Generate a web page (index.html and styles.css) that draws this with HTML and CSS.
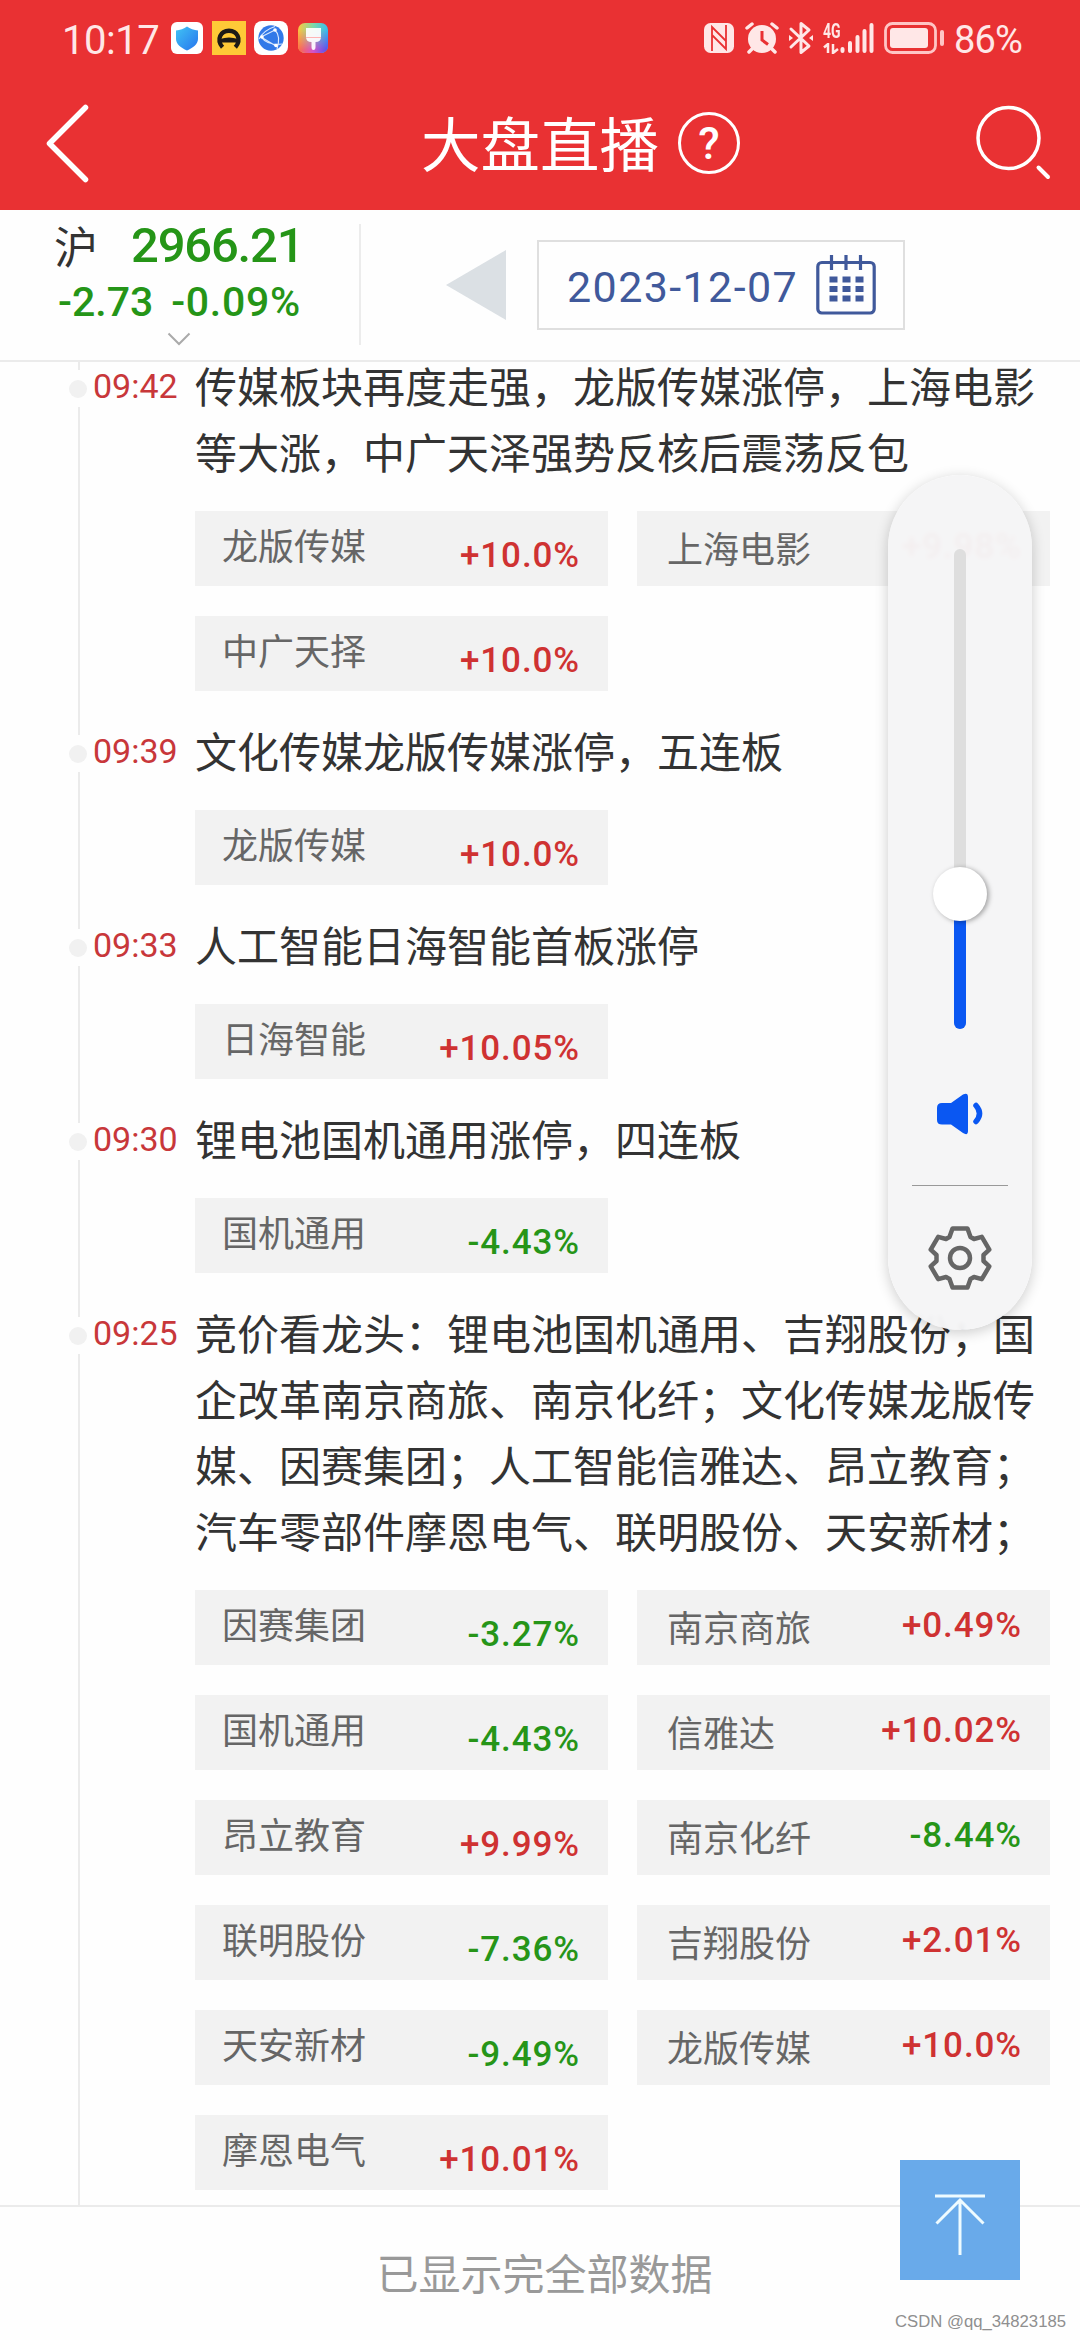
FILE: index.html
```html
<!DOCTYPE html>
<html lang="zh-CN">
<head>
    <meta charset="UTF-8">
    <meta name="viewport" content="width=device-width, initial-scale=1.0">
    <title>大盘直播</title>
    <link rel="stylesheet" href="styles.css">
</head>
<body>
    <header class="header">
        <div class="status-bar">
            <span class="clock">10:17</span>
            <svg class="app-icon shield" width="32" height="32" viewBox="0 0 32 32">
                <defs><linearGradient id="blue" x1="0" y1="0" x2="1" y2="1"><stop offset="0" stop-color="#41c4f4"/><stop offset="1" stop-color="#2674ee"/></linearGradient></defs>
                <rect width="32" height="32" rx="6" fill="#fff"/>
                <path d="M16 4.5C19 7 23 8 27 8.500V17C27 22 22 26 16 28.500C10 26 5 22 5 17V8.500C9 8 13 7 16 4.500Z" fill="url(#blue)"/>
            </svg>
            <svg class="app-icon helmet" width="34" height="34" viewBox="0 0 34 34">
                <rect width="34" height="34" fill="#fec937"/>
                <path d="M9.500 27C1.500 18 7.500 8.500 17 8.500S32.500 18 24.500 27" transform="translate(2.500 2) scale(.85 .9)" fill="none" stroke="#1c1a17" stroke-width="5"/>
                <path d="M8 18Q17 15 26 18V21.500H8Z" fill="#1c1a17"/>
            </svg>
            <svg class="app-icon globe" width="34" height="34" viewBox="0 0 34 34">
                <rect width="34" height="34" rx="8" fill="#fff"/>
                <circle cx="17" cy="17" r="12.700" fill="#3279e8"/>
                <path d="M21 5.500Q10 9 5 18M21 9Q27 15 23 28M7 16Q14 25 28 23M21 9L7 16L22 25" fill="none" stroke="#d9e9ff" stroke-width="1.100"/>
                <circle cx="21" cy="9" r="1.800" fill="#fff"/><circle cx="8" cy="16" r="1.800" fill="#fff"/><circle cx="22" cy="24.500" r="1.800" fill="#fff"/>
            </svg>
            <svg class="app-icon paint" width="30" height="30" viewBox="0 0 30 30">
                <defs>
                    <linearGradient id="top" x1="0" x2="1"><stop offset="0" stop-color="#ffc83d"/><stop offset=".5" stop-color="#7fd8a8"/><stop offset="1" stop-color="#35bdf0"/></linearGradient>
                    <linearGradient id="low" x1="0" x2="1"><stop offset="0" stop-color="#ff6b45"/><stop offset=".5" stop-color="#d553c8"/><stop offset="1" stop-color="#5050f0"/></linearGradient>
                    <linearGradient id="fade" x2="0" y2="1"><stop offset=".2" stop-color="#fff" stop-opacity="0"/><stop offset=".9" stop-color="#fff"/></linearGradient>
                    <mask id="half"><rect width="30" height="30" fill="url(#fade)"/></mask>
                </defs>
                <rect width="30" height="30" rx="7" fill="url(#top)"/>
                <rect width="30" height="30" rx="7" fill="url(#low)" mask="url(#half)"/>
                <path d="M8 5H23V14Q23 19 17.500 19V24Q17.500 27 15.500 27T13.500 24V19Q8 19 8 14Z" fill="#fff" opacity=".92"/>
                <path d="M8 14.500H23" stroke="#ffb4b4" stroke-width="1"/>
            </svg>

            <div class="status-right">
                <svg class="nfc" width="30" height="30" viewBox="0 0 30 30">
                    <rect width="30" height="30" rx="6.500" fill="#ffe7e7"/>
                    <path d="M8 28V4L22 18V6M22 2V26L8 12V24" fill="none" stroke="#e93133" stroke-width="1.800"/>
                </svg>
                <svg class="alarm" width="34" height="32" viewBox="0 0 34 32">
                    <circle cx="17" cy="17" r="14" fill="#ffe7e7"/>
                    <path d="M2 6L7 2M32 6L27 2M7 27L4 30M27 27L30 30" stroke="#ffe7e7" stroke-width="3.500" stroke-linecap="round"/>
                    <path d="M17 9V18L23 22.500" fill="none" stroke="#e93133" stroke-width="3"/>
                </svg>
                <svg class="bluetooth" width="26" height="34" viewBox="0 0 26 34">
                    <path d="M3 8L21 25L13 31.500V2.500L21 9L3 26" fill="none" stroke="#ffe7e7" stroke-width="3" stroke-linejoin="round" stroke-linecap="round"/>
                    <path d="M1 14L5 17L1 20ZM25 14L21 17L25 20Z" fill="#ffe7e7"/>
                </svg>
                <div class="network">
                    <span>4G</span>
                    <svg width="16" height="11" viewBox="0 0 16 11"><path d="M1 4.500L5 1V10M10 1V10L15 6" fill="none" stroke="#ffe7e7" stroke-width="2.500"/></svg>
                </div>
                <svg class="signal" width="34" height="30" viewBox="0 0 34 30">
                    <path d="M2.500 26V28M10 20V28M17.500 14V28M24.500 8V28M31.500 2V28" stroke="#ffe7e7" stroke-width="4" stroke-linecap="round"/>
                </svg>
                <svg class="battery" width="61" height="32" viewBox="0 0 61 32">
                    <rect x="1.500" y="1.500" width="50" height="29" rx="7" fill="none" stroke="#ffc5c5" stroke-width="2.800"/>
                    <rect x="6" y="6" width="38" height="20" rx="3" fill="#ffe7e7"/>
                    <rect x="56" y="8" width="4" height="16" rx="2" fill="#ffc5c5"/>
                </svg>
                <span class="percent">86%</span>
            </div>
        </div>

        <div class="nav-bar">
            <svg class="back" width="44" height="80" viewBox="0 0 44 80"><path d="M40.500 4.500L4.500 40.500L40.500 76.500" fill="none" stroke="#fff" stroke-width="5.500" stroke-linecap="round" stroke-linejoin="round"/></svg>
            <h1>大盘直播</h1>
            <span class="help">?</span>
            <svg class="search" width="76" height="76" viewBox="0 0 76 76"><circle cx="33.500" cy="33" r="30.500" fill="none" stroke="#fff" stroke-width="3.500"/><path d="M63.500 62.500L73 72" stroke="#fff" stroke-width="4" stroke-linecap="round"/></svg>
        </div>
    </header>

    <section class="index-bar">
        <div class="index-info">
            <div class="index-main"><span class="index-name">沪</span><span class="index-value">2966.21</span></div>
            <div class="index-change"><span>-2.73</span><span class="rate">-0.09%</span></div>
            <svg class="expand" width="24" height="14" viewBox="0 0 24 14"><path d="M1.500 1.500L12 12L22.500 1.500" fill="none" stroke="#aaa" stroke-width="2"/></svg>
        </div>
        <svg class="prev-day" width="60" height="70" viewBox="0 0 60 70"><path d="M0 35L60 0V70Z" fill="#dbe0e4"/></svg>
        <div class="date-box">
            <span>2023-12-07</span>
            <svg width="60" height="60" viewBox="0 0 60 60">
                <rect x="1.800" y="7.500" width="56.400" height="50.500" rx="4" fill="none" stroke="#40599b" stroke-width="3.200"/>
                <path d="M15.500 0V15M30 0V15M44.500 0V15" stroke="#40599b" stroke-width="3.200"/>
                <path d="M13.500 24.500H48M13.500 34H48M13.500 43.500H48" stroke="#40599b" stroke-width="6.200" stroke-dasharray="8 5"/>
            </svg>
        </div>
    </section>

    <main class="timeline">
        <article class="item">
            <i class="dot"></i>
            <time>09:42</time>
            <div class="content">
                <p>传媒板块再度走强，龙版传媒涨停，上海电影等大涨，中广天泽强势反核后震荡反包</p>
                <div class="stocks">
                    <div class="stock"><span>龙版传媒</span><b class="up">+10.0%</b></div>
                    <div class="stock"><span>上海电影</span><b class="up">+9.98%</b></div>
                    <div class="stock"><span>中广天择</span><b class="up">+10.0%</b></div>
                </div>
            </div>
        </article>
        <article class="item">
            <i class="dot"></i>
            <time>09:39</time>
            <div class="content">
                <p>文化传媒龙版传媒涨停，五连板</p>
                <div class="stocks">
                    <div class="stock"><span>龙版传媒</span><b class="up">+10.0%</b></div>
                </div>
            </div>
        </article>
        <article class="item">
            <i class="dot"></i>
            <time>09:33</time>
            <div class="content">
                <p>人工智能日海智能首板涨停</p>
                <div class="stocks">
                    <div class="stock"><span>日海智能</span><b class="up">+10.05%</b></div>
                </div>
            </div>
        </article>
        <article class="item">
            <i class="dot"></i>
            <time>09:30</time>
            <div class="content">
                <p>锂电池国机通用涨停，四连板</p>
                <div class="stocks">
                    <div class="stock"><span>国机通用</span><b class="down">-4.43%</b></div>
                </div>
            </div>
        </article>
        <article class="item">
            <i class="dot"></i>
            <time>09:25</time>
            <div class="content">
                <p>竞价看龙头：锂电池国机通用、吉翔股份；国企改革南京商旅、南京化纤；文化传媒龙版传媒、因赛集团；人工智能信雅达、昂立教育；汽车零部件摩恩电气、联明股份、天安新材；</p>
                <div class="stocks">
                    <div class="stock"><span>因赛集团</span><b class="down">-3.27%</b></div>
                    <div class="stock"><span>南京商旅</span><b class="up">+0.49%</b></div>
                    <div class="stock"><span>国机通用</span><b class="down">-4.43%</b></div>
                    <div class="stock"><span>信雅达</span><b class="up">+10.02%</b></div>
                    <div class="stock"><span>昂立教育</span><b class="up">+9.99%</b></div>
                    <div class="stock"><span>南京化纤</span><b class="down">-8.44%</b></div>
                    <div class="stock"><span>联明股份</span><b class="down">-7.36%</b></div>
                    <div class="stock"><span>吉翔股份</span><b class="up">+2.01%</b></div>
                    <div class="stock"><span>天安新材</span><b class="down">-9.49%</b></div>
                    <div class="stock"><span>龙版传媒</span><b class="up">+10.0%</b></div>
                    <div class="stock"><span>摩恩电气</span><b class="up">+10.01%</b></div>
                </div>
            </div>
        </article>
    </main>

    <footer class="footer">已显示完全部数据</footer>

    <!-- volume panel -->
    <aside class="volume">
        <div class="track"><div class="level"></div><div class="knob"></div></div>
        <svg class="speaker" width="46" height="42" viewBox="0 0 46 42">
            <path d="M5 10H14L26 1.500Q31 -1 31 4V38Q31 43 26 40L14 31.500H5Q0 31.500 0 27V15Q0 10 5 10Z" fill="#0a57f2"/>
            <path d="M39 12.500Q46 20.500 39 28.500" fill="none" stroke="#0a57f2" stroke-width="5.500" stroke-linecap="round"/>
        </svg>
        <hr>
        <svg class="gear" width="64" height="64" viewBox="-32 -32 64 64">
            <path d="M-7.500 -29.500H7.500L10.500 -21L14 -19L21.800 -21.200L29.300 -8.300L23.500 -3V3L29.300 8.300L21.800 21.200L14 19L10.500 21L7.500 29.500H-7.500L-10.500 21L-14 19L-21.800 21.200L-29.300 8.300L-23.500 3V-3L-29.300 -8.300L-21.800 -21.200L-14 -19L-10.500 -21Z" fill="none" stroke="#666" stroke-width="4.500" stroke-linejoin="round"/>
            <circle r="10" fill="none" stroke="#666" stroke-width="4.500"/>
        </svg>
    </aside>

    <button class="to-top">
        <svg width="56" height="64" viewBox="0 0 56 64"><path d="M3 3H53M28 7V62M4.500 30.500L28 7L51.500 30.500" fill="none" stroke="#eefbff" stroke-width="3"/></svg>
    </button>
    <span class="watermark">CSDN @qq_34823185</span>
</body>
</html>
```
FILE: styles.css
```css
* {
    box-sizing: border-box;
}

body {
    position: relative;
    width: 1080px;
    height: 2340px;
    margin: 0;
    overflow: hidden;
    background-color: #fefefe;
    color: #333;
    font-family: Roboto, "Noto Sans CJK SC", sans-serif;
}

svg {
    display: block;
    flex: none;
}

/* header */
.header {
    height: 210px;
    background-color: #e93133;
    color: #fff;
}

.status-bar {
    display: flex;
    align-items: center;
    height: 76px;
    padding: 0 57px 0 62px;
    color: #ffe7e7;
}

.clock {
    width: 109px;
    margin-top: 4px;
    font-size: 40px;
    letter-spacing: -0.5px;
}

.helmet {
    margin-left: 9px;
}

.globe {
    margin-left: 8px;
}

.paint {
    margin-left: 10px;
}

.status-right {
    display: flex;
    align-items: center;
    margin-left: auto;
}

.alarm {
    margin-left: 11px;
}

.bluetooth {
    margin-left: 9px;
}

.network {
    display: flex;
    flex-direction: column;
    gap: 4px;
    width: 17px;
    margin-left: 9px;
    font-size: 20px;
    line-height: 16px;
    font-weight: 700;
}

.network span {
    transform: scaleX(0.7);
    transform-origin: left;
}

.battery {
    margin-left: 10px;
}

.percent {
    width: 69px;
    margin: 4px 0 0 9px;
    font-size: 38px;
    letter-spacing: -0.8px;
    white-space: nowrap;
}

.nav-bar {
    display: flex;
    align-items: center;
    height: 134px;
    padding: 0 29px 0 45px;
}

.back {
    margin-top: -1px;
}

h1 {
    margin: 7px 0 0 332px;
    font-size: 59.5px;
    font-weight: 400;
    line-height: 80px;
}

.help {
    width: 62px;
    height: 62px;
    margin-left: 19px;
    border: 3px solid #fff;
    border-radius: 50%;
    font-size: 44px;
    font-weight: 500;
    line-height: 58px;
    text-align: center;
}

.search {
    margin-left: auto;
}

/* index and date */
.index-bar {
    display: flex;
    align-items: flex-start;
    height: 152px;
    padding-top: 14px;
    border-bottom: 2px solid #ebebeb;
}

.index-info {
    width: 361px;
    height: 121px;
    padding-left: 54px;
    border-right: 2px solid #ececec;
    color: #259517;
    font-weight: 500;
}

.index-main {
    display: flex;
    align-items: center;
    height: 42px;
}

.index-name {
    width: 77px;
    color: #333;
    font-size: 44px;
    font-weight: 400;
}

.index-value {
    font-size: 49px;
    letter-spacing: -1.2px;
}

.index-change {
    display: flex;
    gap: 18px;
    height: 66px;
    padding-left: 4px;
    font-size: 41px;
    line-height: 72px;
}

.rate {
    letter-spacing: 0.7px;
}

.expand {
    margin-left: 113px;
}

.prev-day {
    margin: 26px 0 0 85px;
}

.date-box {
    display: flex;
    align-items: center;
    justify-content: space-between;
    width: 368px;
    height: 90px;
    margin: 16px 0 0 31px;
    padding: 0 27px 0 28px;
    border: 2px solid #dfdfdf;
    color: #40599b;
    font-size: 43px;
    letter-spacing: 1.4px;
}

.date-box span {
    margin-top: 3px;
}

/* news timeline */
.timeline {
    display: flex;
    flex-direction: column;
    height: 1843px;
    background: linear-gradient(#ebebeb, #ebebeb) 78px 0 / 2px 100% no-repeat;
}

.item {
    display: flex;
    align-items: flex-start;
    margin-bottom: 29px;
    padding-left: 67px;
}

.item:first-child {
    margin-top: -7px;
}

.dot {
    width: 22px;
    height: 37px;
    margin-top: 15px;
    padding: 10px 2px;
    background-color: #fefefe;
}

.dot::before {
    content: "";
    display: block;
    width: 18px;
    height: 18px;
    border-radius: 50%;
    background-color: #f1f1f1;
}

time {
    width: 106px;
    padding-left: 4px;
    color: #c8373a;
    font-size: 34px;
    line-height: 63px;
}

.content {
    width: 855px;
}

.content p {
    margin: -3px 0 27px;
    font-family: "Noto Sans CJK SC", sans-serif;
    font-size: 42px;
    line-height: 66px;
}

.stocks {
    display: grid;
    grid-template-columns: 413px 413px;
    gap: 30px 29px;
}

.stock {
    display: flex;
    justify-content: space-between;
    height: 75px;
    padding: 0 28px 0 27px;
    background-color: #f2f2f2;
    color: #666;
    font-size: 36px;
    line-height: 74px;
}

.stock b {
    font-size: 35px;
    font-weight: 500;
    line-height: 89px;
    letter-spacing: 0.9px;
}

.stock:nth-child(even) {
    padding-left: 30px;
    line-height: 81px;
}

.stock:nth-child(even) b {
    line-height: 71px;
}

.up {
    color: #cf3232;
}

.down {
    color: #269518;
}

.footer {
    height: 135px;
    padding-left: 9px;
    border-top: 2px solid #ebebeb;
    color: #999;
    font-size: 42px;
    line-height: 137px;
    text-align: center;
}

/* volume panel floats over the list */
.volume {
    position: absolute;
    top: 475px;
    left: 888px;
    display: flex;
    flex-direction: column;
    align-items: center;
    width: 144px;
    height: 855px;
    padding-top: 74px;
    border-radius: 72px;
    background-color: rgba(245, 245, 246, 0.97);
    box-shadow: 0 3px 14px rgba(0, 0, 0, 0.2);
    backdrop-filter: blur(2px);
}

.track {
    position: relative;
    display: flex;
    align-items: flex-end;
    width: 12px;
    height: 480px;
    border-radius: 6px;
    background-color: #dedede;
}

.level {
    width: 12px;
    height: 135px;
    border-radius: 0 0 6px 6px;
    background-color: #0a57f2;
}

.knob {
    position: absolute;
    left: -21px;
    bottom: 108px;
    width: 54px;
    height: 54px;
    border-radius: 50%;
    background-color: #fff;
    box-shadow: 2px 1px 5px rgba(0, 0, 0, 0.35);
}

.speaker {
    margin-top: 64px;
}

.volume hr {
    width: 96px;
    height: 1px;
    margin: 50px 0 40px;
    border: 0;
    background-color: #999;
}

.to-top {
    position: absolute;
    top: 2160px;
    left: 900px;
    display: flex;
    justify-content: center;
    width: 120px;
    height: 120px;
    padding: 33px 0 0;
    border: 0;
    background-color: #69aaea;
}

.watermark {
    position: absolute;
    top: 2312px;
    right: 14px;
    color: #8f8f8f;
    font-family: "Liberation Sans", Arial, sans-serif;
    font-size: 16.7px;
    line-height: 20px;
}
```
